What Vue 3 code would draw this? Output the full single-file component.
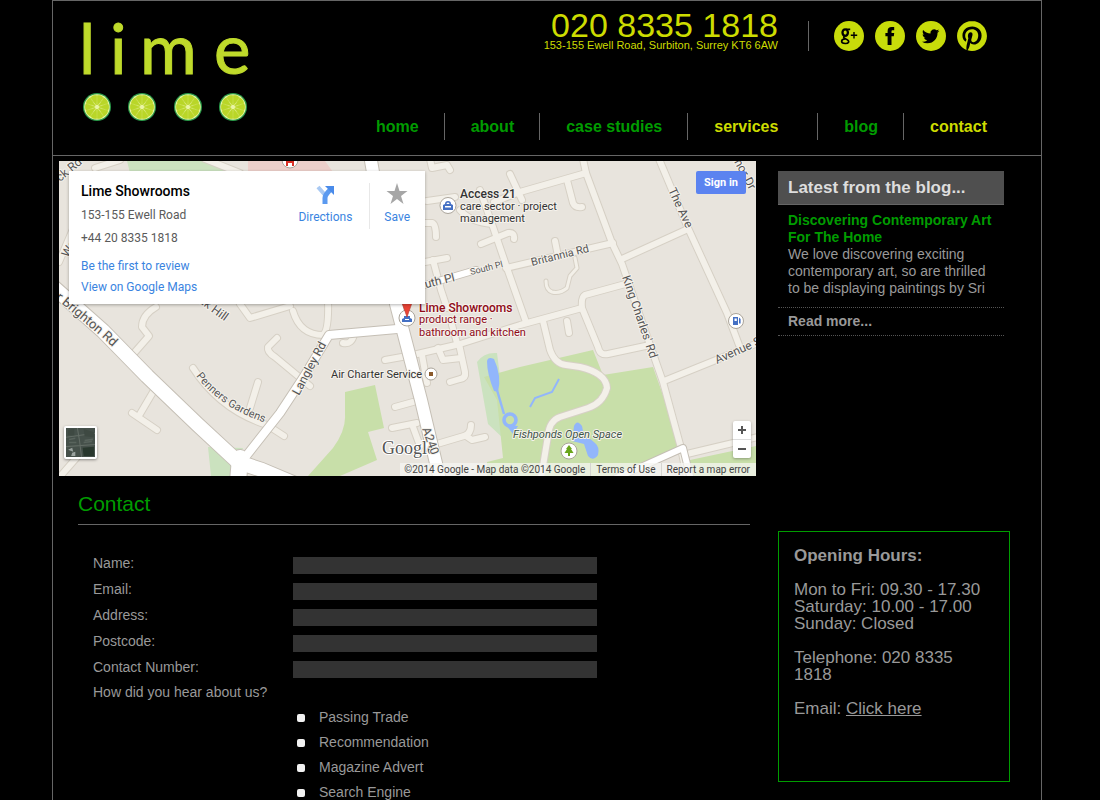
<script setup>
import { ref } from 'vue'

const nav = [
  { label: 'home' },
  { label: 'about' },
  { label: 'case studies' },
  { label: 'services', active: true, wide: true },
  { label: 'blog' },
  { label: 'contact', active: true },
]

const fields = [
  { id: 'name', label: 'Name:', type: 'text' },
  { id: 'email', label: 'Email:', type: 'email' },
  { id: 'address', label: 'Address:', type: 'text' },
  { id: 'postcode', label: 'Postcode:', type: 'text' },
  { id: 'phone', label: 'Contact Number:', type: 'tel' },
]
const form = ref({ name: '', email: '', address: '', postcode: '', phone: '' })
const sources = ['Passing Trade', 'Recommendation', 'Magazine Advert', 'Search Engine']
const heard = ref([])

const letters = [
  { char: 'l', x: 79 },
  { char: 'i', x: 110 },
  { char: 'm', x: 140 },
  { char: 'e', x: 214 },
]
const slices = [97, 142, 188, 233]
const wedges = Array.from({ length: 10 }, (_, i) => i * 36)

const minorRoads = [
  'M583 159L586 173L612 243L622 264L650 345L663 382L681 448L687 478',
  'M659 159L688 228L727 313L739 345',
  'M688 229L622 259',
  'M758 343L716 360L664 381',
  'M687 454L758 437',
  'M494 202L520 192L586 173',
  'M567 180L573 203Q575 208 582 207',
  'M506 268L613 243',
  'M555 241L558 256',
  'M629 283L585 295Q581 297 582 308L520 325L460 344L413 355L385 360',
  'M582 308L598 347Q600 356 608 354L650 345',
  'M543 321L550 350Q555 364 566 365L580 367Q606 373 607 388Q603 403 588 408L560 417Q549 421 548 436L541 478',
  'M567 321L569 333',
  'M480 190L493 227L507 268L526 322',
  'M481 244L508 233Q515 232 514 239',
  'M510 174L522 200',
  'M425 262L447 258',
  'M433 260L441 290L447 308',
  'M427 201L455 197M460 210Q470 222 492 224',
  'M425 223L432 223Q436 224 436 237',
  'M422 355L427 383',
  'M438 348L443 360L461 358',
  'M459 344L465 372Q466 378 460 379L450 382',
  'M452 325L457 343',
  'M395 407L413 402',
  'M392 428L417 423',
  'M413 427L420 446',
  'M437 444L464 436Q471 434 471 425M466 436L472 440L485 437',
  'M343 343Q352 345 354 334',
  'M293 311Q300 335 323 335Q329 330 328 300',
  'M277 338L268 347Q267 352 275 357L310 386',
  'M258 382L250 408',
  'M193 368Q220 410 267 425L284 436',
  'M153 392L140 414M132 413L157 430',
  'M135 352L149 336L142 327Q142 315 156 307',
  'M57 480L78 456',
  'M430 159L432 168L447 165L450 170',
  'M59 262L76 222',
  'M240 304L250 318L290 306',
  'M205 159L240 173',
  'M95 168L120 160',
]
const narrowRoads = ['M575 258L577 268L570 276L567 288Q560 294 552 292Q546 290 546 281']
const majorRoads = [
  { d: 'M370 155L396 304L408 350L421 400L440 480', w: 12 },
  { d: 'M50 284L103 331L147 376L197 424L238 462L262 470L300 486', w: 14 },
  { d: 'M240 458L238 482', w: 16 },
  { d: 'M243 460L280 413L303 378L329 335L397 329', w: 8 },
  { d: 'M425 285L476 270', w: 6 },
  { d: 'M612 480L683 448L691 480', w: 6 },
]
</script>

<template>
  <div class="page">
    <header class="header">
      <a class="logo" href="#" aria-label="lime">
        <svg viewBox="78 1 176 126" width="176" height="126">
          <g class="wordmark">
            <text v-for="l in letters" :key="l.char" :x="l.x" y="74">{{ l.char }}</text>
          </g>
          <g v-for="cx in slices" :key="cx" :transform="`translate(${cx} 107)`">
            <circle r="14" fill="#2a9a49" />
            <circle r="12.8" fill="#eaf4a6" />
            <path
              v-for="a in wedges"
              :key="a"
              :transform="`rotate(${a + 18})`"
              d="M0 -2.2L3.2 -10.8Q0 -12.8 -3.2 -10.8Z"
              fill="#b9d628"
              stroke="#b9d628"
              stroke-width="0.7"
            />
          </g>
        </svg>
      </a>

      <div class="head-right">
        <div class="top">
          <div class="details">
            <div class="phone">020 8335 1818</div>
            <div class="street">153-155 Ewell Road, Surbiton, Surrey KT6 6AW</div>
          </div>
          <div class="social">
            <a href="#" aria-label="Google+">
              <svg viewBox="0 0 30 30">
                <circle cx="15" cy="15" r="15" />
                <g fill="none" stroke="#000">
                  <ellipse cx="11.2" cy="11.6" rx="2.700" ry="3.300" stroke-width="2.300" />
                  <path d="M10.4 15.1C8.8 16.5 10.2 17.1 12 18C16.8 20.2 14.4 22.6 11.2 22.5C6.3 22.3 6.7 18.2 11 18M12.2 8.3H16.2" stroke-width="1.7" />
                  <path d="M16.8 14.3H23.2M20 11.1V17.5" stroke-width="1.4" />
                </g>
              </svg>
            </a>
            <a href="#" aria-label="Facebook">
              <svg viewBox="0 0 30 30">
                <circle cx="15" cy="15" r="15" />
                <path fill="#000" d="M12.6 24V15.3H10.4V12H12.6V10.2C12.6 7.4 14 6 16.7 6H19.200V9.3H17.7C16.8 9.3 16.5 9.7 16.5 10.6V12H19.200L18.8 15.3H16.5V24Z" />
              </svg>
            </a>
            <a href="#" aria-label="Twitter">
              <svg viewBox="0 0 30 30">
                <circle cx="15" cy="15" r="15" />
                <path fill="#000" transform="translate(6 6.6) scale(.72)" d="M23.953 4.57a10 10 0 01-2.825.775 4.958 4.958 0 002.163-2.723c-.951.555-2.005.959-3.127 1.184a4.92 4.92 0 00-8.384 4.482C7.69 8.095 4.067 6.13 1.64 3.162a4.822 4.822 0 00-.666 2.475c0 1.71.87 3.213 2.188 4.096a4.904 4.904 0 01-2.228-.616v.06a4.923 4.923 0 003.946 4.827 4.996 4.996 0 01-2.212.085 4.936 4.936 0 004.604 3.417 9.867 9.867 0 01-6.102 2.105c-.39 0-.779-.023-1.17-.067a13.995 13.995 0 007.557 2.209c9.053 0 13.998-7.496 13.998-13.985 0-.21 0-.42-.015-.63A9.935 9.935 0 0024 4.59z" />
              </svg>
            </a>
            <a href="#" aria-label="Pinterest">
              <svg viewBox="0 0 24 24">
                <path d="M12.017 0C5.396 0 .029 5.367.029 11.987c0 5.079 3.158 9.417 7.618 11.162-.105-.949-.199-2.403.041-3.439.219-.937 1.406-5.957 1.406-5.957s-.359-.72-.359-1.781c0-1.663.967-2.911 2.168-2.911 1.024 0 1.518.769 1.518 1.688 0 1.029-.653 2.567-.992 3.992-.285 1.193.6 2.165 1.775 2.165 2.128 0 3.768-2.245 3.768-5.487 0-2.861-2.063-4.869-5.008-4.869-3.41 0-5.409 2.562-5.409 5.199 0 1.033.394 2.143.889 2.741.099.12.112.225.085.345-.09.375-.293 1.199-.334 1.363-.053.225-.172.271-.401.165-1.495-.69-2.433-2.878-2.433-4.646 0-3.776 2.748-7.252 7.92-7.252 4.158 0 7.392 2.967 7.392 6.923 0 4.135-2.607 7.462-6.233 7.462-1.214 0-2.354-.629-2.758-1.379l-.749 2.848c-.269 1.045-1.004 2.352-1.498 3.146 1.123.345 2.306.535 3.55.535 6.607 0 11.985-5.365 11.985-11.987C23.97 5.39 18.592.026 11.985.026L12.017 0z" />
              </svg>
            </a>
          </div>
        </div>
        <nav class="nav">
          <a
            v-for="item in nav"
            :key="item.label"
            href="#"
            :class="{ active: item.active, wide: item.wide }"
          >{{ item.label }}</a>
        </nav>
      </div>
    </header>

    <main class="body">
      <section class="map" aria-label="Map">
        <svg class="canvas" viewBox="59 161 697 315" preserveAspectRatio="xMidYMid slice">
          <rect x="59" y="161" width="697" height="315" fill="#e8e4dd" />
          <path fill="#cbe2bf" d="M127 161H220L228 173H130ZM208 447L243 448L232 476H211ZM477 362Q484 352 497 353L503 400L505 440L488 424Z" />
          <path fill="#eccfca" d="M248 161H325L333 172H248Z" />
          <path fill="#c8dfa9" d="M345 392L375 385L384 428L368 432L377 460L340 476H308L333 448Q346 430 345 415ZM484 377L520 367L593 350L603 375L653 367L681 446L612 476H487V462L503 458L497 400ZM690 460L756 446V476H690Z" />
          <g class="water">
            <path d="M487 361Q488 356 494 359Q502 376 498 392L494 391Q487 374 487 361Z" />
            <path d="M497 390L504 414" fill="none" stroke="#92b6fb" stroke-width="2.4" />
            <circle cx="510" cy="420" r="6" fill="none" stroke="#92b6fb" stroke-width="3.6" />
            <path d="M506 425L513 434L518 426Z" />
            <path d="M559 379L552 392L535 398L530 407" fill="none" stroke="#92b6fb" stroke-width="2" />
            <path d="M574 426Q577 419 582 426L584 436Q590 438 595 443Q600 447 598 455Q593 462 588 456L584 444L572 441Z" />
          </g>

          <g class="line" stroke="#d6d0c5" stroke-width="8">
            <path v-for="d in minorRoads" :key="d" :d="d" />
          </g>
          <g class="line" stroke="#d6d0c5" stroke-width="5">
            <path v-for="d in narrowRoads" :key="d" :d="d" />
          </g>
          <g class="line" stroke="#f3f0e9" stroke-width="6">
            <path v-for="d in minorRoads" :key="d" :d="d" />
          </g>
          <g class="line" stroke="#f3f0e9" stroke-width="3">
            <path v-for="d in narrowRoads" :key="d" :d="d" />
          </g>
          <g class="line" stroke="#c5bfb5">
            <path v-for="r in majorRoads" :key="r.d" :d="r.d" :stroke-width="r.w + 2" />
          </g>
          <g class="line" stroke="#fff">
            <path v-for="r in majorRoads" :key="r.d" :d="r.d" :stroke-width="r.w" />
          </g>

          <text class="google" x="382" y="454">Google</text>

          <path id="brighton" d="M50 294L103 338L150 382" fill="none" />
          <path id="penners" d="M196 376Q222 410 270 424" fill="none" />
          <g class="road">
            <text class="large"><textPath href="#brighton">er Brighton Rd</textPath></text>
            <text class="small"><textPath href="#penners">Penners Gardens</textPath></text>
            <text transform="translate(60 182) rotate(-40)">ck Rd</text>
            <text transform="translate(68 258) rotate(-60)">Wo</text>
            <text transform="translate(198 302) rotate(36)">ak Hill</text>
            <text transform="translate(299 396) rotate(-62)">Langley Rd</text>
            <text transform="translate(419 290) rotate(-14)">outh Pl</text>
            <text class="tiny" transform="translate(471 275) rotate(-14)">South Pl</text>
            <text class="small" transform="translate(532 266) rotate(-14)">Britannia Rd</text>
            <text transform="translate(622 277) rotate(71)">King Charles' Rd</text>
            <text transform="translate(668 190) rotate(65)">The Ave</text>
            <text transform="translate(731 156) rotate(62)">anor Dr</text>
            <text transform="translate(717 364) rotate(-24)">Avenue S</text>
            <text transform="translate(422 429) rotate(70)">A240</text>
          </g>

          <circle class="pin" cx="290" cy="160" r="8" />
          <path d="M287 157V166M293 157V166M287 162H293" stroke="#d93025" stroke-width="2" />

          <g class="poi">
            <circle class="pin" cx="448" cy="205.5" r="8" />
            <path d="M443 205L445 204Q445 201 448 201Q451 201 451 204L453 205V210H443ZM446.500 204H449.500Q449.500 202.500 448 202.500Q446.500 202.500 446.500 204ZM445 206V207.500H451V206Z" fill="#4470c4" fill-rule="evenodd" />
            <text class="bold" x="460" y="198">Access 21</text>
            <text x="460" y="210">care sector · project</text>
            <text x="460" y="222">management</text>
            <text x="331" y="378">Air Charter Service</text>
            <circle class="pin" cx="431" cy="374" r="6" />
            <rect x="429" y="372" width="4" height="4" fill="#8a5a2b" />
            <g class="red">
              <text class="bold" x="419" y="312">Lime Showrooms</text>
              <text x="419" y="323">product range ·</text>
              <text x="419" y="336">bathroom and kitchen</text>
            </g>
            <circle class="pin" cx="407" cy="318" r="8" />
            <path d="M404 318V316H410V318L412 319V322H402V319ZM405 319V320H409V319Z" fill="#4470c4" fill-rule="evenodd" />
            <path d="M401 300H413L407 317Z" fill="#ea4335" stroke="#b4362c" stroke-width="0.6" />
            <circle class="pin" cx="736" cy="321" r="7.500" />
            <path d="M733 317H738V325H733ZM734.500 318.500V321H736.800V318.500ZM739 317.500L740.600 319V323.500H739Z" fill="#4470c4" fill-rule="evenodd" />
            <text class="italic" x="513" y="438">Fishponds Open Space</text>
            <circle class="pin" cx="569" cy="451" r="8" />
            <path d="M569 445L572 449H571L573.500 453H570V456H568V453H564.500L567 449H566Z" fill="#6aa51c" />
          </g>
        </svg>

        <div class="card">
          <div class="place">
            <strong>Lime Showrooms</strong>
            <span>153-155 Ewell Road</span>
            <span>+44 20 8335 1818</span>
            <a class="review" href="#">Be the first to review</a>
            <a href="#">View on Google Maps</a>
          </div>
          <div class="actions">
            <a href="#">
              <svg width="24" height="24" viewBox="0 0 24 24">
                <path d="M5 4L12 12V21" fill="none" stroke="#a9c9f3" stroke-width="4" />
                <path d="M12 21V15Q12 12 17 7" fill="none" stroke="#5b9af0" stroke-width="5" />
                <path d="M12 3H21V12Z" fill="#4a8bea" />
              </svg>
              Directions
            </a>
            <a class="save" href="#">
              <svg width="24" height="24" viewBox="0 0 24 24">
                <path fill="#a6a6a6" d="M12 0L14.500 8H22.500L16 13L18.500 21L12 16L5.500 21L8 13L1.500 8H9.500Z" />
              </svg>
              Save
            </a>
          </div>
        </div>

        <button class="signin" type="button">Sign in</button>
        <button class="thumb" type="button" aria-label="Satellite view">
          <svg viewBox="0 0 28 28">
            <rect width="28" height="28" fill="#45504a" />
            <path d="M11 0L13 12L15 28M0 9L28 5M0 18L28 16" stroke="#626c65" stroke-width="1" fill="none" />
            <path d="M17 1L27 4V9L18 8ZM2 2L8 1V7L2 7Z" fill="#3e4942" />
            <path d="M16 19L27 18V27H17Z" fill="#28372d" />
            <path d="M2 21L6 19L7 23ZM6 24L9 23L9 27L5 27Z" fill="#9aa29e" />
            <path d="M3 11L9 10M18 12L26 11M3 14L10 14M17 14L25 13" stroke="#59645d" stroke-width="1.500" />
          </svg>
        </button>
        <div class="zoom">
          <button type="button" aria-label="Zoom in">
            <svg viewBox="0 0 18 18"><path d="M5 9H13M9 5V13" /></svg>
          </button>
          <button type="button" aria-label="Zoom out">
            <svg viewBox="0 0 18 18"><path d="M5 9H13" /></svg>
          </button>
        </div>
        <div class="credits">
          <span>©2014 Google - Map data ©2014 Google</span>
          <a href="#">Terms of Use</a>
          <a href="#">Report a map error</a>
        </div>
      </section>

      <aside class="blog">
        <h2>Latest from the blog...</h2>
        <div class="post">
          <a href="#">Discovering Contemporary Art For The Home</a>
          <p>We love discovering exciting contemporary art, so are thrilled to be displaying paintings by Sri</p>
        </div>
        <a class="more" href="#">Read more...</a>
      </aside>

      <section class="contact">
        <h1>Contact</h1>
        <form class="form" @submit.prevent>
          <div v-for="f in fields" :key="f.id" class="row">
            <label :for="f.id">{{ f.label }}</label>
            <input :id="f.id" v-model="form[f.id]" :type="f.type" />
          </div>
          <fieldset class="heard">
            <legend>How did you hear about us?</legend>
            <label v-for="s in sources" :key="s">
              <input v-model="heard" type="checkbox" :value="s" />
              {{ s }}
            </label>
          </fieldset>
        </form>
      </section>

      <aside class="hours">
        <h2>Opening Hours:</h2>
        <p>Mon to Fri: 09.30 - 17.30<br />Saturday: 10.00 - 17.00<br />Sunday: Closed</p>
        <p>Telephone: 020 8335 1818</p>
        <p>Email: <a href="#">Click here</a></p>
      </aside>
    </main>
  </div>
</template>

<style>
html,
body {
  background: #000;
}
body {
  margin: 0;
}
html {
  scrollbar-width: none;
}
</style>

<style scoped>
.page,
.page * {
  box-sizing: border-box;
}
.page {
  max-width: 990px;
  min-height: 100vh;
  margin: 0 58px 0 52px;
  border: 1px solid #666;
  border-bottom: 0;
  background: #000;
  color: #999;
  font-family: "Liberation Sans", Arial, sans-serif;
  font-size: 14px;
  line-height: 17px;
}
.page a {
  text-decoration: none;
}
h1,
h2,
p {
  margin: 0;
}

.header {
  display: flex;
  justify-content: space-between;
  padding: 0 54px 0 25px;
  border-bottom: 1px solid #666;
}
.logo,
.logo svg {
  display: block;
}
.wordmark {
  font-family: Lato, "Open Sans", sans-serif;
  font-size: 69px;
  fill: #bfda2b;
  stroke: #bfda2b;
  stroke-width: 1;
}
.head-right {
  display: flex;
  flex-direction: column;
  align-items: flex-end;
  justify-content: space-between;
  height: 154px;
  padding: 8px 0 15px;
}
.top {
  display: flex;
}
.details {
  padding-right: 30px;
  color: #cddc00;
  text-align: right;
}
.phone {
  font-size: 34px;
  line-height: 32px;
}
.street {
  font-size: 11px;
  line-height: 9px;
}
.social {
  display: flex;
  gap: 11px;
  height: 30px;
  margin-top: 12px;
  padding-left: 25px;
  border-left: 1px solid #666;
}
.social svg {
  display: block;
  width: 30px;
  height: 30px;
  fill: #c8dc0a;
}
.nav {
  display: flex;
  font-size: 16px;
  font-weight: bold;
  line-height: 27px;
}
.nav a {
  padding: 0 25px 0 26px;
  color: #009c00;
}
.nav a + a {
  border-left: 1px solid #666;
}
.nav a.active {
  color: #cddc00;
}
.nav a.wide {
  padding-right: 39px;
}
.nav a:last-child {
  padding-right: 0;
}

.body {
  display: grid;
  grid-template-columns: minmax(0, 1fr) 232px;
  column-gap: 22px;
  padding: 5px 31px 0 6px;
}

.map {
  position: relative;
  height: 315px;
  overflow: hidden;
  font-family: Roboto, sans-serif;
}
.canvas {
  display: block;
  width: 100%;
  height: 100%;
}
.water {
  fill: #92b6fb;
}
.line {
  fill: none;
  stroke-linecap: round;
  stroke-linejoin: round;
}
.road text,
.poi text {
  font-size: 12px;
  fill: #555;
  stroke: #f5f2ec;
  stroke-width: 2px;
  paint-order: stroke;
  stroke-linejoin: round;
}
.poi text {
  font-size: 11px;
  fill: #333;
}
.road .large {
  font-size: 13px;
}
.road .small {
  font-size: 11px;
}
.road .tiny {
  font-size: 9px;
}
.poi .bold {
  font-size: 12px;
  font-weight: 500;
}
.poi .italic {
  font-style: italic;
  fill: #3e5548;
}
.poi .red text {
  fill: #8f0a18;
}
.pin {
  fill: #fff;
  stroke: #aaa49a;
  stroke-width: 1;
}
.google {
  font-family: "Liberation Serif", serif;
  font-size: 18px;
  fill: #555;
  stroke: #fff;
  stroke-width: 2px;
  paint-order: stroke;
}
.card {
  position: absolute;
  top: 10px;
  left: 10px;
  display: flex;
  justify-content: space-between;
  width: 356px;
  height: 133px;
  padding: 12px 15px 0 12px;
  background: #fff;
  box-shadow: 0 1px 3px rgba(0, 0, 0, 0.3);
  color: #5a5a5a;
  font-size: 12px;
}
.card a {
  color: #3a84df;
}
.place {
  display: flex;
  flex-direction: column;
  gap: 6px;
}
.place strong {
  padding-bottom: 1px;
  color: #000;
  font-size: 14px;
  font-weight: 500;
}
.place .review {
  margin-top: 5px;
}
.place .review + a {
  margin-top: -2px;
}
.actions {
  display: flex;
  height: 46px;
}
.actions a {
  display: flex;
  flex-direction: column;
  align-items: center;
  gap: 2px;
}
.actions a:first-child {
  padding-right: 17px;
}
.actions .save {
  padding-left: 14px;
  border-left: 1px solid #e8e8e8;
}
.signin {
  position: absolute;
  top: 10px;
  right: 10px;
  height: 23px;
  padding: 0 8px;
  border: 0;
  border-radius: 2px;
  background: #5b83f0;
  color: #fff;
  font: bold 11px/23px Roboto, sans-serif;
}
.thumb {
  position: absolute;
  bottom: 17px;
  left: 5px;
  width: 33px;
  height: 33px;
  padding: 2px;
  border: 0;
  border-radius: 2px;
  background: #fff;
  box-shadow: 0 1px 3px rgba(0, 0, 0, 0.4);
}
.thumb svg {
  display: block;
}
.zoom {
  position: absolute;
  right: 5px;
  bottom: 18px;
  display: grid;
  width: 18px;
  border-radius: 2px;
  background: #fff;
  box-shadow: 0 1px 3px rgba(0, 0, 0, 0.3);
}
.zoom button {
  height: 18px;
  padding: 0;
  border: 0;
  background: none;
}
.zoom button + button {
  height: 19px;
  border-top: 1px solid #ddd;
}
.zoom svg {
  display: block;
  width: 18px;
  height: 18px;
  stroke: #555;
  stroke-width: 2;
}
.credits {
  position: absolute;
  right: 0;
  bottom: 0;
  display: flex;
  padding: 0 6px 0 4px;
  background: rgba(245, 245, 242, 0.75);
  color: #444;
  font-size: 10px;
  line-height: 13px;
}
.credits a {
  margin-left: 5px;
  padding-left: 5px;
  border-left: 1px solid #d5d5d0;
  color: #444;
}

.blog {
  width: 226px;
  padding-top: 10px;
}
.blog h2 {
  padding: 0 10px;
  background: #4f4f4f;
  border-bottom: 1px solid #666;
  color: #ddd;
  font-size: 17px;
  line-height: 33px;
}
.post {
  padding: 7px 0 10px 10px;
  border-bottom: 1px dotted #555;
}
.post a {
  color: #009c00;
  font-weight: bold;
}
.post p {
  padding-right: 10px;
}
.more {
  display: block;
  padding: 5px 10px;
  border-bottom: 1px dotted #555;
  color: #999;
  font-weight: bold;
}

.contact {
  margin-top: 15px;
  padding: 0 6px 0 19px;
}
.contact h1 {
  padding-bottom: 7px;
  border-bottom: 1px solid #666;
  color: #009c00;
  font-size: 21px;
  font-weight: normal;
  line-height: 26px;
}
.form {
  padding: 25px 15px 0;
}
.row {
  display: flex;
  height: 26px;
}
.row label {
  width: 200px;
  line-height: 26px;
}
.row input {
  width: 304px;
  height: 17px;
  margin: 7px 0 0;
  padding: 0 4px;
  border: 0;
  background: #333;
  color: #ccc;
  font: inherit;
}
.heard {
  margin: 0;
  padding: 0;
  border: 0;
}
.heard legend {
  padding: 0;
  line-height: 25px;
}
.heard label {
  display: flex;
  align-items: center;
  gap: 14px;
  height: 25px;
  margin-left: 204px;
}
.heard input {
  width: 8px;
  height: 8px;
  margin: 0;
  appearance: none;
  border-radius: 2px;
  background: #f2f2f2;
}
.heard input:checked {
  background: #009c00;
}

.hours {
  height: 251px;
  margin-top: 55px;
  padding: 15px;
  border: 1px solid #009c00;
  font-size: 17px;
}
.hours h2 {
  font-size: 17px;
  line-height: 17px;
}
.hours p {
  margin-top: 17px;
}
.hours a {
  color: #999;
  text-decoration: underline !important;
}
</style>
